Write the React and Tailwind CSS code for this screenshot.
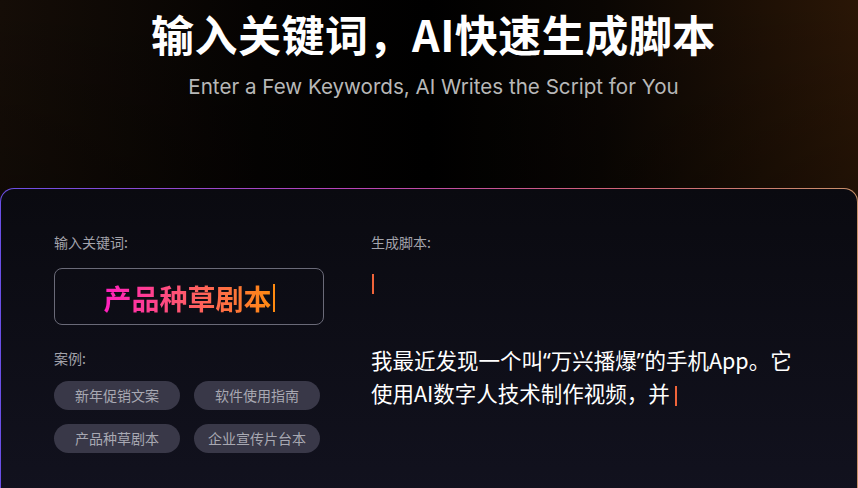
import React from 'react';

const cjk = { fontFamily: '"Noto Sans CJK SC", "Noto Sans", sans-serif' };
const latin = { fontFamily: '"Noto Sans", sans-serif' };

const examples = ['新年促销文案', '软件使用指南', '产品种草剧本', '企业宣传片台本'];

const Caret = ({ className = '' }) => (
  <span className={`inline-block w-[2px] bg-[#f0643a] align-middle ${className}`} />
);

const App = () => {
  return (
    <div
      className="relative w-[858px] h-[488px] overflow-hidden bg-black"
      style={cjk}
    >
      {/* Background glow */}
      <div className="absolute inset-0 bg-[linear-gradient(90deg,#150d07_0%,#050302_30%,#000000_50%,#0a0603_70%,#2a1606_100%)]" />
      <div className="absolute inset-0 bg-[linear-gradient(180deg,rgba(0,0,0,0)_0%,rgba(0,0,0,0.35)_60%,rgba(0,0,0,0)_100%)]" />

      <div className="relative flex flex-col items-center">
        {/* Heading */}
        <div className="pl-[9px] flex flex-col items-center">
          <h1 className="mt-[5px] text-[43px] leading-[56px] font-bold text-white tracking-[0.5px]">
            输入关键词，AI快速生成脚本
          </h1>
          <p
            className="mt-[12px] text-[20.6px] leading-[28px] text-[#b8b8b8]"
            style={{ fontFamily: 'Inter, "Noto Sans", sans-serif' }}
          >
            Enter a Few Keywords, AI Writes the Script for You
          </p>
        </div>

        {/* Card with gradient border */}
        <div className="mt-[87px] w-full rounded-t-[14px] p-[1px] pb-0 bg-[linear-gradient(90deg,#6a4fe6_0%,#b843b8_40%,#d0607a_70%,#c8906a_100%)]">
          <div className="h-[320px] rounded-t-[13px] bg-[linear-gradient(180deg,#0a0a10_0%,#12121f_100%)] flex pt-[43px] pl-[53px]">
            {/* Left column */}
            <div className="w-[270px] flex flex-col">
              <div className="text-[14px] leading-[20px] text-[#a3a3ab]">输入关键词:</div>
              <div className="mt-[16px] h-[57px] rounded-[8px] border border-[#6a6a78] flex items-center justify-center">
                <span className="mt-[2px] text-[28px] leading-[34px] font-semibold bg-[linear-gradient(90deg,#ff1fc0_0%,#ff5a6a_50%,#ff8a10_100%)] bg-clip-text text-transparent">
                  产品种草剧本
                </span>
                <Caret className="mt-[2px] h-[28px] ml-[1px] bg-[#ff8a10]" />
              </div>

              <div className="mt-[23px] text-[14px] leading-[20px] text-[#a3a3ab]">案例:</div>
              <div className="mt-[13px] grid grid-cols-[126px_126px] gap-x-[14px] gap-y-[14px]">
                {examples.map((t) => (
                  <div
                    key={t}
                    className="h-[29px] rounded-full bg-[#393848] flex items-center justify-center text-[14px] text-[#a8a8b2]"
                  >
                    {t}
                  </div>
                ))}
              </div>
            </div>

            {/* Right column */}
            <div className="ml-[47px] flex flex-col">
              <div className="text-[14px] leading-[20px] text-[#a3a3ab]">生成脚本:</div>
              <div className="mt-[22px] h-[20px]">
                <Caret className="h-[20px] ml-[1px] align-top" />
              </div>
              <div className="mt-[49px] text-[21.5px] leading-[33px] text-white">
                <div className="h-[33px]">
                  我最近发现一个叫<span className="leading-none" style={latin}>“</span>万兴播爆<span className="leading-none" style={latin}>”</span>的手机App。它
                </div>
                <div className="h-[33px]">
                  使用AI数字人技术制作视频，并 <Caret className="h-[20px]" />
                </div>
              </div>
            </div>
          </div>
        </div>
      </div>
    </div>
  );
};

export default App;
